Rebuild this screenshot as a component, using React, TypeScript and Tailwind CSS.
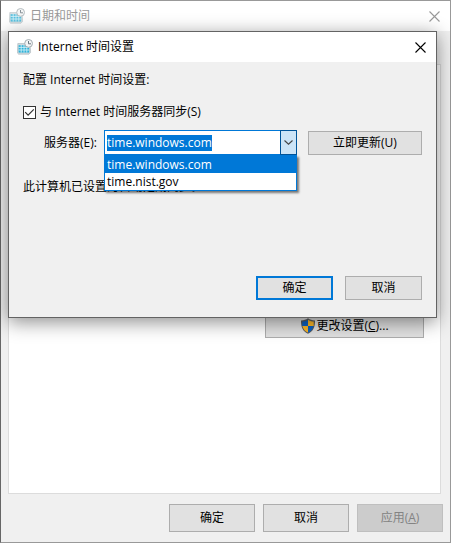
import React, { useEffect, useRef } from 'react'

const CalendarClockIcon: React.FC<{ className?: string }> = ({ className = '' }) => (
  <svg viewBox="0 0 16 16" className={`h-4 w-4 shrink-0 ${className}`} aria-hidden="true">
    <path d="M0.8 4.5 H13 L13.6 13.4 L12 15.2 H1.6 L0.4 14 Z" fill="#cfd8dc" stroke="#a9b5ba" strokeWidth="0.6" />
    <path d="M1.6 6.2 H12.2 V13.6 H1.6 Z" fill="#2fb2d8" />
    <path d="M1.6 8.4H12.2M1.6 11H12.2M4.2 6V13.6M7 6V13.6M9.8 6V13.6" stroke="#d9f3fa" strokeWidth="0.8" />
    <circle cx="11.6" cy="4.4" r="3.9" fill="#f3f4f5" stroke="#a3adb2" strokeWidth="1" />
    <path d="M11.5 2V4.8H14" fill="none" stroke="#5c6b75" strokeWidth="0.9" />
  </svg>
)

const ShieldIcon: React.FC = () => (
  <svg viewBox="0 0 16 16" className="h-4 w-4 shrink-0" aria-hidden="true">
    <path d="M8 0.3 C6 1.8 4 2.4 1 2.4 C0.8 8.5 2.6 13.2 8 15.8 C13.4 13.2 15.2 8.5 15 2.4 C12 2.4 10 1.8 8 0.3 Z" fill="#5b5d5e" />
    <path d="M8 1.8 C6.4 2.9 4.7 3.5 2.3 3.6 V8 H8 Z" fill="#0b62c4" />
    <path d="M8 1.8 C9.6 2.9 11.3 3.5 13.7 3.6 V8 H8 Z" fill="#fdb827" />
    <path d="M2.4 8 C3.1 11 5 13.2 8 14.6 V8 Z" fill="#fdb827" />
    <path d="M13.6 8 C12.9 11 11 13.2 8 14.6 V8 Z" fill="#0b62c4" />
  </svg>
)

const CloseButton: React.FC<{ label: string; className?: string }> = ({ label, className = '' }) => (
  <button type="button" aria-label={label} className={`flex h-full w-8 items-center justify-center ${className}`}>
    <svg viewBox="0 0 11 11" className="h-[11px] w-[11px]" aria-hidden="true">
      <path d="M0.5 0.5 L10.5 10.5 M10.5 0.5 L0.5 10.5" fill="none" stroke="currentColor" strokeWidth="1.1" />
    </svg>
  </button>
)

const Button: React.FC<{ className: string; disabled?: boolean; children: React.ReactNode }> = ({
  className,
  disabled,
  children
}) => (
  <button type="button" disabled={disabled} className={`flex items-center justify-center ${className}`}>
    {children}
  </button>
)

const servers = ['time.windows.com', 'time.nist.gov']

const ServerCombo: React.FC = () => {
  const inputRef = useRef<HTMLInputElement>(null)

  useEffect(() => {
    inputRef.current?.focus()
    inputRef.current?.select()
  }, [])

  return (
    <div className="relative w-[193px]">
      <div className="flex h-[25px] border border-[#0078d7] bg-white">
        <input
          id="server"
          ref={inputRef}
          type="text"
          role="combobox"
          aria-expanded="true"
          aria-controls="server-list"
          defaultValue={servers[0]}
          className="min-w-0 flex-1 pl-[2px] outline-none selection:bg-[#0078d7] selection:text-white"
        />
        <button
          type="button"
          aria-label="展开"
          className="-my-px -mr-px flex w-[17px] items-center justify-center border border-[#005499] bg-[#cce4f7]"
        >
          <svg viewBox="0 0 9 5" className="h-[5px] w-[9px]" aria-hidden="true">
            <path d="M0.5 0.5 L4.5 4.2 L8.5 0.5" fill="none" stroke="#444" strokeWidth="1.1" />
          </svg>
        </button>
      </div>
      <ul
        id="server-list"
        role="listbox"
        className="absolute top-full left-0 w-full border border-t-0 border-[#0078d7] bg-white leading-[17px] shadow-[2px_2px_2px_rgba(0,0,0,0.5)]"
      >
        {servers.map((server, index) => (
          <li
            key={server}
            role="option"
            aria-selected={index === 0}
            className={index === 0 ? 'bg-[#0078d7] px-[2px] pt-px text-white' : 'px-[2px]'}
          >
            {server}
          </li>
        ))}
      </ul>
    </div>
  )
}

const InternetTimeDialog: React.FC = () => (
  <section
    role="dialog"
    aria-label="Internet 时间设置"
    className="absolute top-[30px] right-[13px] left-[7px] border border-[#636363] bg-[#f0f0f0] shadow-[0_4px_18px_rgba(0,0,0,0.45)]"
  >
    <header className="flex h-[30px] items-center bg-white pl-2">
      <CalendarClockIcon />
      <h2 className="ml-[5px] flex-1">Internet 时间设置</h2>
      <CloseButton label="关闭" className="text-black" />
    </header>

    <div className="px-[14px] pt-2 pb-[17px]">
      <p className="leading-5">配置 Internet 时间设置:</p>

      <label className="mt-3 flex items-center leading-5">
        <span className="relative mr-1 h-[13px] w-[13px]">
          <input
            type="checkbox"
            defaultChecked
            className="peer block h-[13px] w-[13px] appearance-none border border-[#333] bg-white"
          />
          <svg
            viewBox="0 0 13 13"
            className="pointer-events-none absolute inset-0 hidden h-[13px] w-[13px] peer-checked:block"
            aria-hidden="true"
          >
            <path d="M2.2 6.2 L5.1 9.2 L10.8 3.4" fill="none" stroke="#333" strokeWidth="1.2" />
          </svg>
        </span>
        与 Internet 时间服务器同步(S)
      </label>

      <div className="mt-2 flex items-center">
        <label htmlFor="server" className="w-[81px] pl-[21px] whitespace-nowrap">服务器(E):</label>
        <ServerCombo />
        <Button className="ml-[11px] h-6 flex-1 border border-[#adadad] bg-[#e1e1e1]">立即更新(U)</Button>
      </div>

      <p className="mt-[22px] leading-5">此计算机已设置为自动定期同步。</p>

      <div className="mt-[79px] flex justify-end gap-3">
        <Button className="h-6 w-[77px] border-2 border-[#0078d7] bg-[#e1e1e1]">确定</Button>
        <Button className="h-6 w-[77px] border border-[#adadad] bg-[#e1e1e1]">取消</Button>
      </div>
    </div>
  </section>
)

const App: React.FC = () => {
  return (
    <main className="relative flex min-h-screen flex-col border border-[#999] border-l-[#666] bg-[#f0f0f0] font-['Open_Sans','Noto_Sans_CJK_SC',sans-serif] text-xs text-black">
      <header className="flex h-[30px] items-center bg-white pl-2 text-[#999]">
        <CalendarClockIcon className="opacity-80" />
        <h1 className="ml-[5px] flex-1">日期和时间</h1>
        <CloseButton label="关闭窗口" />
      </header>

      <div className="mt-[33px] mr-[9px] ml-[7px] flex flex-1 flex-col items-end border border-[#dcdcdc] bg-white px-4 pt-[248px]">
        <Button className="h-[25px] w-[159px] border border-[#adadad] bg-[#e1e1e1]">
          <ShieldIcon />
          <span>
            更改设置(<u>C</u>)...
          </span>
        </Button>
      </div>

      <footer className="flex justify-end gap-2 px-[7px] pt-[10px] pb-[10px]">
        <Button className="h-7 w-[86px] border border-[#adadad] bg-[#e1e1e1]">确定</Button>
        <Button className="h-7 w-[86px] border border-[#adadad] bg-[#e1e1e1]">取消</Button>
        <Button disabled className="h-7 w-[86px] border border-[#bfbfbf] bg-[#ccc] text-[#838383]">
          <span>
            应用(<u>A</u>)
          </span>
        </Button>
      </footer>

      <InternetTimeDialog />
    </main>
  )
}

export default App
